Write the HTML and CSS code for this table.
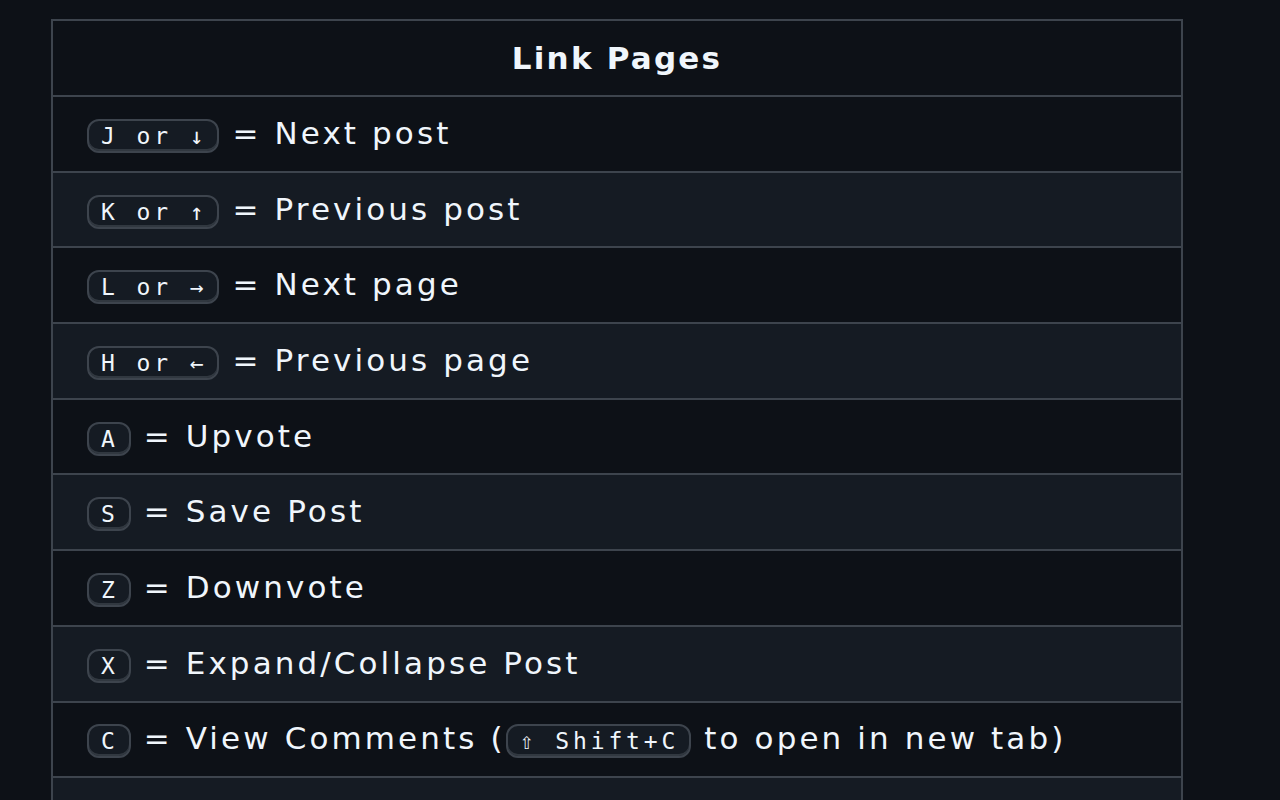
FILE: index.html
```html
<!DOCTYPE html>
<html lang="en">
  <head>
    <meta charset="UTF-8" />
    <title>Keyboard Shortcuts</title>
    <link rel="stylesheet" href="styles.css">
  </head>
  <body>
    <div class="shortcuts">
      <div class="shortcuts-head">Link Pages</div>
      <div class="shortcut-row">
        <span><kbd>J or ↓</kbd> = Next post</span>
      </div>
      <div class="shortcut-row alt">
        <span><kbd>K or ↑</kbd> = Previous post</span>
      </div>
      <div class="shortcut-row">
        <span><kbd>L or →</kbd> = Next page</span>
      </div>
      <div class="shortcut-row alt">
        <span><kbd>H or ←</kbd> = Previous page</span>
      </div>
      <div class="shortcut-row">
        <span><kbd>A</kbd> = Upvote</span>
      </div>
      <div class="shortcut-row alt">
        <span><kbd>S</kbd> = Save Post</span>
      </div>
      <div class="shortcut-row">
        <span><kbd>Z</kbd> = Downvote</span>
      </div>
      <div class="shortcut-row alt">
        <span><kbd>X</kbd> = Expand/Collapse Post</span>
      </div>
      <div class="shortcut-row">
        <span><kbd>C</kbd> = View Comments (<kbd>⇧ Shift+C</kbd> to open in new tab)</span>
      </div>
      <div class="shortcut-row alt"></div>
    </div>
  </body>
</html>
```

FILE: styles.css
```css
body {
  margin: 0;
  padding: 0;
  background-color: #0d1117;
  color: #f0f6fc;
  font-family: "DejaVu Sans", Inter, sans-serif;
  overflow: hidden;
}

.shortcuts {
  box-sizing: border-box;
  margin: 19px 0 0 51px;
  width: 1132px;
  border: 2px solid #3d444d;
  border-bottom: none;
}

.shortcuts-head {
  height: 74px;
  display: flex;
  align-items: center;
  justify-content: center;
  font-size: 31px;
  font-weight: 700;
  letter-spacing: 2.2px;
  border-bottom: 2px solid #3d444d;
}

.shortcut-row {
  height: 73.7px;
  display: flex;
  align-items: center;
  padding-left: 34px;
  font-size: 31px;
  letter-spacing: 3.1px;
  white-space: nowrap;
  border-bottom: 2px solid #3d444d;
}

.shortcut-row.alt {
  background-color: #151b23;
}

kbd {
  display: inline-block;
  font-family: "DejaVu Sans Mono", monospace;
  font-size: 23px;
  letter-spacing: 3.9px;
  line-height: 30px;
  padding: 0 10px 0 12px;
  color: #f0f6fc;
  background-color: #151b23;
  border: 2px solid #3d444d;
  border-radius: 12px;
  box-shadow: inset 0 -2px 0 #3d444db3;
}
```
